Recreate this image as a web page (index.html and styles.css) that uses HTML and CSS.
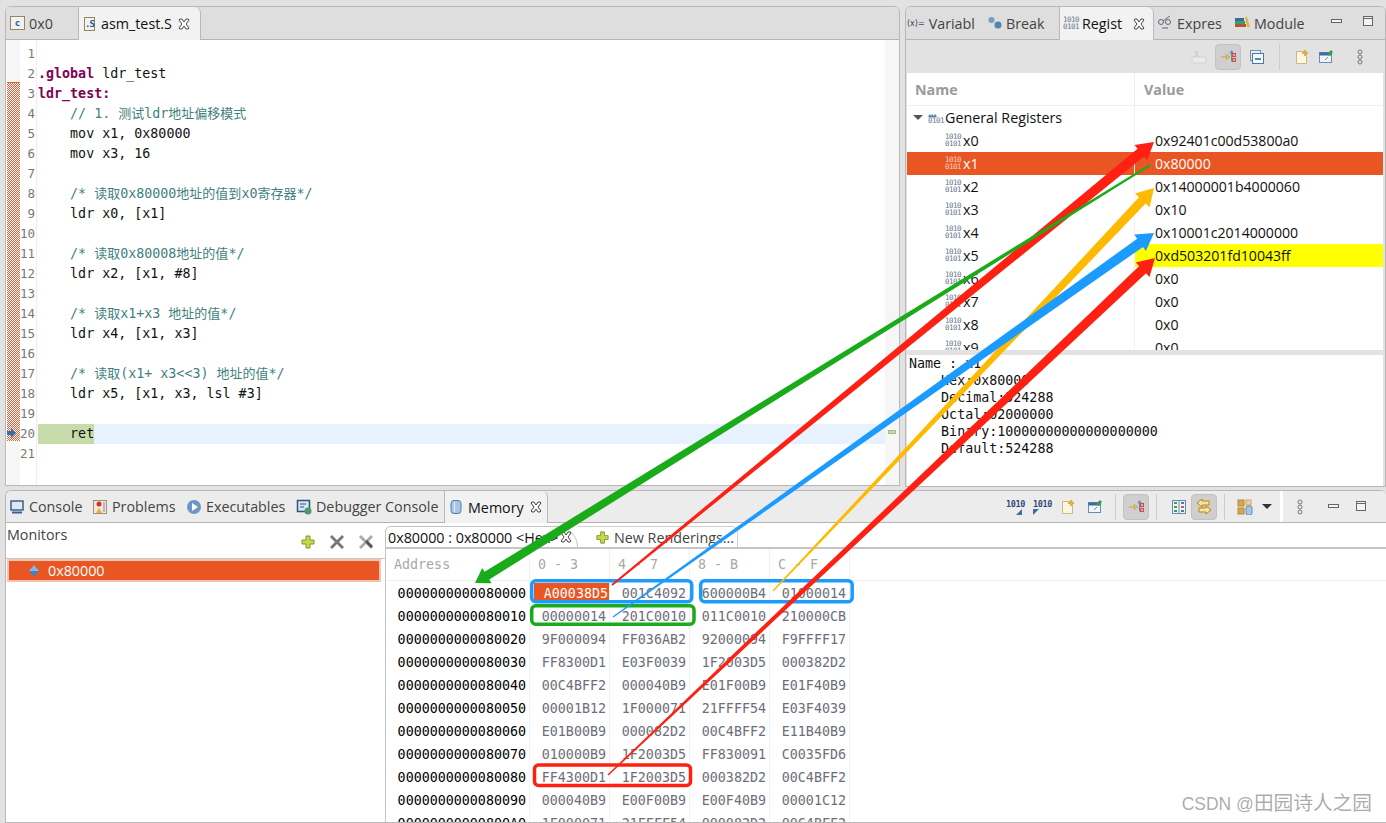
FILE: index.html
```html
<!DOCTYPE html>
<html lang="en">
<head>
    <meta charset="UTF-8">
    <meta name="viewport" content="width=device-width, initial-scale=1.0">
    <title>asm_test.S - Eclipse</title>
    <link rel="stylesheet" href="styles.css">
</head>
<body>
    <svg class="defs" width="0" height="0">
        <symbol id="i-min" viewBox="0 0 16 16"><rect x="2.5" y="5.5" width="10" height="3" fill="#f4f4f4" stroke="#666"/></symbol>
        <symbol id="i-max" viewBox="0 0 16 16"><rect x="3.5" y="2.5" width="9" height="9" fill="#f4f4f4" stroke="#666"/><path d="M3.5 4.5h9" stroke="#666"/></symbol>
        <symbol id="i-close" viewBox="0 0 12 12"><path d="M2 1h2l2 3 2-3h2l1 1-3 4 3 4-1 1H8L6 8l-2 3H2l-1-1 3-4-3-4z" fill="#fff" stroke="#444"/></symbol>
        <symbol id="i-dots" viewBox="0 0 16 16"><circle cx="8" cy="3" r="2" fill="none" stroke="#777"/><circle cx="8" cy="8" r="2" fill="none" stroke="#777"/><circle cx="8" cy="13" r="2" fill="none" stroke="#777"/></symbol>
        <symbol id="i-layout" viewBox="0 0 18 16"><path d="M1 8h9M7 5l4 3-4 3z" fill="#f5dc8c" stroke="#c8a040"/><path d="M13 13V2M11 4l2-3 2 3" fill="none" stroke="#4a7ab0"/><path d="M13 6h3M13 11h3" stroke="#888"/><rect x="14" y="4" width="3.5" height="3.5" fill="#f4a0a0" stroke="#c04848"/><rect x="14" y="9.5" width="3.5" height="3.5" fill="#f4a0a0" stroke="#c04848"/></symbol>
        <symbol id="i-new" viewBox="0 0 16 16"><path d="M2.5 2.5h10v12h-10z" fill="#fbf6e0" stroke="#c9b98a"/><path d="M11 1v6M8 4h6" stroke="#e0b040" stroke-width="2"/></symbol>
        <symbol id="i-pin" viewBox="0 0 16 16"><rect x="1.5" y="3.5" width="12" height="10" fill="#f2f6fb" stroke="#6a8cb0"/><path d="M1.5 5h12" stroke="#3a6ea5" stroke-width="3"/><path d="M7 11l3-3" stroke="#888"/><path d="M9 5l4-4 2 2-4 4z" fill="#3f9a45"/></symbol>
    </svg>

    <div class="top">
        <div class="panel editor-panel">
            <div class="tabs">
                <div class="tab tab-file"><span class="file-icon file-c">c</span>0x0</div>
                <div class="tab active tab-asm"><span class="file-icon file-s">.S</span>asm_test.S<svg class="close"><use href="#i-close"/></svg></div>
            </div>
            <div class="editor">
                <div class="marks">
                    <div class="mark-band"></div>
                    <svg class="pc-arrow" viewBox="0 0 10 10"><path d="M0 3h4V0l5 5-5 5V7H0z" fill="#3a6ea5"/></svg>
                </div>
                <div class="line-numbers">
                    <div>1</div><div>2</div><div>3</div><div>4</div><div>5</div><div>6</div><div>7</div>
                    <div>8</div><div>9</div><div>10</div><div>11</div><div>12</div><div>13</div><div>14</div>
                    <div>15</div><div>16</div><div>17</div><div>18</div><div>19</div><div>20</div><div>21</div>
                </div>
                <div class="code">
                    <div class="ln"></div>
                    <div class="ln"><b>.global</b> ldr_test</div>
                    <div class="ln"><b>ldr_test:</b></div>
                    <div class="ln cm">    // 1. <span class="cn">测试</span>ldr<span class="cn">地址偏移模式</span></div>
                    <div class="ln">    mov x1, 0x80000</div>
                    <div class="ln">    mov x3, 16</div>
                    <div class="ln"></div>
                    <div class="ln cm">    /* <span class="cn">读取</span>0x80000<span class="cn">地址的值到</span>x0<span class="cn">寄存器</span>*/</div>
                    <div class="ln">    ldr x0, [x1]</div>
                    <div class="ln"></div>
                    <div class="ln cm">    /* <span class="cn">读取</span>0x80008<span class="cn">地址的值</span>*/</div>
                    <div class="ln">    ldr x2, [x1, #8]</div>
                    <div class="ln"></div>
                    <div class="ln cm">    /* <span class="cn">读取</span>x1+x3 <span class="cn">地址的值</span>*/</div>
                    <div class="ln">    ldr x4, [x1, x3]</div>
                    <div class="ln"></div>
                    <div class="ln cm">    /* <span class="cn">读取</span>(x1+ x3&lt;&lt;3) <span class="cn">地址的值</span>*/</div>
                    <div class="ln">    ldr x5, [x1, x3, lsl #3]</div>
                    <div class="ln"></div>
                    <div class="ln current"><span class="cur-hit">    ret</span></div>
                    <div class="ln"></div>
                </div>
                <div class="overview"><div class="overview-mark"></div></div>
            </div>
        </div>

        <div class="panel regs-panel">
            <div class="tabs">
                <div class="tab tab-var"><span class="var-icon">(x)=</span>Variabl</div>
                <div class="tab tab-break"><svg class="ic" viewBox="0 0 16 16"><circle cx="4.5" cy="5" r="3" fill="#7a9cc0"/><circle cx="11" cy="10" r="3.5" fill="#4f84b4"/></svg>Break</div>
                <div class="tab active tab-reg"><span class="bits">1010<br>0101</span>Regist<svg class="close"><use href="#i-close"/></svg></div>
                <div class="tab tab-expr"><svg class="ic" viewBox="0 0 16 16"><circle cx="4" cy="7" r="2.5" fill="none" stroke="#667"/><circle cx="11" cy="7" r="2.5" fill="none" stroke="#667"/><path d="M6 6l7-5M5 13h6" stroke="#667"/></svg>Expres</div>
                <div class="tab tab-mod"><svg class="ic" viewBox="0 0 16 16"><path d="M1 3h9v3H1z" fill="#3c6a9c"/><path d="M1 6h10v3H1z" fill="#3c9c70"/><path d="M1 9h11v3H1z" fill="#a85a30"/><path d="M11 2l2 0 3 10h-3z" fill="#e6b040"/></svg>Module</div>
                <div class="tab-tools">
                    <svg class="ic"><use href="#i-min"/></svg>
                    <svg class="ic"><use href="#i-max"/></svg>
                </div>
            </div>
            <div class="toolbar regs-toolbar">
                <svg class="ic dim" viewBox="0 0 16 16"><rect x="1" y="8" width="14" height="6" rx="1" fill="#eee" stroke="#ccc"/><path d="M4 8l3-6M4 2l4 6" stroke="#bbb"/></svg>
                <span class="tool on"><svg class="ic"><use href="#i-layout"/></svg></span>
                <svg class="ic" viewBox="0 0 16 16"><rect x="1.5" y="1.5" width="10" height="10" fill="#e8eef6" stroke="#6f8fb4"/><rect x="3.5" y="4.5" width="11" height="10" fill="#f6f9fc" stroke="#4a78a8"/><path d="M6 10h6" stroke="#2a5a90" stroke-width="1.5"/></svg>
                <span class="tool-sep"></span>
                <svg class="ic"><use href="#i-new"/></svg>
                <svg class="ic"><use href="#i-pin"/></svg>
                <svg class="ic dots"><use href="#i-dots"/></svg>
            </div>
            <div class="reg-table">
                <div class="reg-head">
                    <div class="col-name">Name</div>
                    <div class="col-value">Value</div>
                </div>
                <div class="reg-rows">
                    <div class="reg-row group"><div class="col-name"><span class="twisty"></span><span class="bits group-bits"><i>&#9650;&#9650;&#9650;</i>0101</span>General Registers</div><div class="col-value"></div></div>
                    <div class="reg-row"><div class="col-name"><span class="bits">1010<br>0101</span>x0</div><div class="col-value">0x92401c00d53800a0</div></div>
                    <div class="reg-row selected"><div class="col-name"><span class="bits">1010<br>0101</span>x1</div><div class="col-value">0x80000</div></div>
                    <div class="reg-row"><div class="col-name"><span class="bits">1010<br>0101</span>x2</div><div class="col-value">0x14000001b4000060</div></div>
                    <div class="reg-row"><div class="col-name"><span class="bits">1010<br>0101</span>x3</div><div class="col-value">0x10</div></div>
                    <div class="reg-row"><div class="col-name"><span class="bits">1010<br>0101</span>x4</div><div class="col-value">0x10001c2014000000</div></div>
                    <div class="reg-row"><div class="col-name"><span class="bits">1010<br>0101</span>x5</div><div class="col-value changed">0xd503201fd10043ff</div></div>
                    <div class="reg-row"><div class="col-name"><span class="bits">1010<br>0101</span>x6</div><div class="col-value">0x0</div></div>
                    <div class="reg-row"><div class="col-name"><span class="bits">1010<br>0101</span>x7</div><div class="col-value">0x0</div></div>
                    <div class="reg-row"><div class="col-name"><span class="bits">1010<br>0101</span>x8</div><div class="col-value">0x0</div></div>
                    <div class="reg-row"><div class="col-name"><span class="bits">1010<br>0101</span>x9</div><div class="col-value">0x0</div></div>
                </div>
            </div>
            <pre class="reg-detail">Name : x1
    Hex:0x80000
    Decimal:524288
    Octal:02000000
    Binary:10000000000000000000
    Default:524288</pre>
        </div>
    </div>

    <div class="panel bottom-panel">
        <div class="tabs bottom-tabs">
            <div class="tab tab-con"><svg class="ic" viewBox="0 0 16 16"><rect x="2" y="2" width="12" height="9" fill="#dce8f4" stroke="#3a6090" stroke-width="1.5"/><path d="M3 13.5h10" stroke="#3a6090" stroke-width="2"/></svg>Console</div>
            <div class="tab tab-prob"><svg class="ic" viewBox="0 0 16 16"><rect x="1.5" y="1.5" width="13" height="13" fill="#f3e6d8" stroke="#a09080"/><circle cx="7" cy="5" r="2.5" fill="#d83030"/><path d="M4 14l3-5 3 5z" fill="#e8b030"/><path d="M12 3v10" stroke="#7090b0"/></svg>Problems</div>
            <div class="tab tab-exe"><svg class="ic" viewBox="0 0 16 16"><circle cx="8" cy="8" r="7" fill="#6d96c4"/><path d="M6 4l6 4-6 4z" fill="#fff"/></svg>Executables</div>
            <div class="tab tab-dbg"><svg class="ic" viewBox="0 0 16 16"><rect x="1.5" y="1.5" width="12" height="11" fill="#d8e4f0" stroke="#2f5480" stroke-width="1.5"/><path d="M4 5h6M4 8h4" stroke="#2f5480"/><circle cx="12" cy="12" r="3.5" fill="#4c9a6a"/></svg>Debugger Console</div>
            <div class="tab active tab-mem"><svg class="ic" viewBox="0 0 16 16"><rect x="3" y="1.5" width="10" height="13" rx="3" fill="#a9c6e6" stroke="#4d7fb0"/><path d="M6.5 3v10" stroke="#e6f0fa"/></svg>Memory<svg class="close"><use href="#i-close"/></svg></div>
            <div class="mem-tools">
                <div class="tool-group group-a">
                    <span class="bit-tool bit-a">1010</span>
                    <span class="bit-tool bit-b">1010</span>
                    <svg class="ic"><use href="#i-new"/></svg>
                    <svg class="ic"><use href="#i-pin"/></svg>
                </div>
                <span class="tool-sep"></span>
                <span class="tool on"><svg class="ic"><use href="#i-layout"/></svg></span>
                <span class="tool-sep"></span>
                <div class="tool-group group-c">
                    <svg class="ic" viewBox="0 0 16 16"><rect x="1.5" y="1.5" width="13" height="13" fill="#eef3f8" stroke="#6a8aa8"/><path d="M8 1.5v13" stroke="#6a8aa8"/><path d="M3 4h3M3 8h3M3 12h3" stroke="#3f9a55" stroke-width="2"/><path d="M10 4h3M10 12h3" stroke="#4a7ab0" stroke-width="2"/><path d="M10 8h3" stroke="#d85a5a" stroke-width="2"/></svg>
                    <span class="tool on"><svg class="ic" viewBox="0 0 16 16"><path d="M1 4l5-4v2h7v4H6v2z" fill="#f7e3a8" stroke="#b8860b"/><path d="M15 11l-5-4v2H3v4h7v2z" fill="#f7e3a8" stroke="#b8860b"/></svg></span>
                </div>
                <span class="tool-sep"></span>
                <div class="tool-group group-d">
                    <svg class="ic" viewBox="0 0 16 16"><rect x="1" y="1" width="6" height="6" fill="#d8a850" stroke="#b08838"/><rect x="9" y="1" width="5" height="5" fill="#eed09a" stroke="#c8a868"/><rect x="1" y="9" width="6" height="6" fill="#d8a850" stroke="#b08838"/><rect x="9" y="7" width="6" height="9" rx="2" fill="#a9c6e6" stroke="#5d8cba"/></svg>
                    <span class="caret"></span>
                </div>
                <span class="white-strip"></span>
                <div class="tool-group group-e">
                    <svg class="ic dots"><use href="#i-dots"/></svg>
                    <svg class="ic"><use href="#i-min"/></svg>
                    <svg class="ic"><use href="#i-max"/></svg>
                </div>
            </div>
        </div>
        <div class="bottom-body">
            <div class="monitors">
                <div class="monitors-head">
                    <span class="monitors-title">Monitors</span>
                    <svg class="ic" viewBox="0 0 16 16"><path d="M6 2h4v4h4v4h-4v4H6v-4H2V6h4z" fill="#c6d94a" stroke="#7f9a2c"/></svg>
                    <svg class="ic" viewBox="0 0 16 16"><path d="M3 1l5 5 5-5 2 2-5 5 5 5-2 2-5-5-5 5-2-2 5-5-5-5z" fill="#777"/></svg>
                    <svg class="ic" viewBox="0 0 16 16"><path d="M3 1l5 5 5-5 2 2-5 5 5 5-2 2-5-5-5 5-2-2 5-5-5-5z" fill="#aaa"/><path d="M7 8l2-2 6 6-2 2z" fill="#555"/></svg>
                </div>
                <div class="monitor-row"><svg class="diamond" viewBox="0 0 12 12"><path d="M6 0l5 6-5 6-5-6z" fill="#4a80b8"/><path d="M6 0l5 6H1z" fill="#8db4dc"/></svg>0x80000</div>
            </div>
            <div class="rendering">
                <div class="render-tabs">
                    <div class="render-tab"><span class="render-title">0x80000 : 0x80000 &lt;Hex&gt;</span><svg class="close"><use href="#i-close"/></svg></div>
                    <div class="render-new"><svg class="plus" viewBox="0 0 16 16"><path d="M6 2h4v4h4v4h-4v4H6v-4H2V6h4z" fill="#c6d94a" stroke="#7f9a2c"/></svg>New Renderings...</div>
                </div>
                <div class="mem-table">
                    <div class="mem-row mem-head"><div class="addr">Address</div><div>0 - 3</div><div>4 - 7</div><div>8 - B</div><div>C - F</div></div>
                    <div class="mem-row"><div class="addr">0000000000080000</div><div class="hit">A00038D5</div><div>001C4092</div><div>600000B4</div><div>01000014</div></div>
                    <div class="mem-row"><div class="addr">0000000000080010</div><div>00000014</div><div>201C0010</div><div>011C0010</div><div>210000CB</div></div>
                    <div class="mem-row"><div class="addr">0000000000080020</div><div>9F000094</div><div>FF036AB2</div><div>92000094</div><div>F9FFFF17</div></div>
                    <div class="mem-row"><div class="addr">0000000000080030</div><div>FF8300D1</div><div>E03F0039</div><div>1F2003D5</div><div>000382D2</div></div>
                    <div class="mem-row"><div class="addr">0000000000080040</div><div>00C4BFF2</div><div>000040B9</div><div>E01F00B9</div><div>E01F40B9</div></div>
                    <div class="mem-row"><div class="addr">0000000000080050</div><div>00001B12</div><div>1F000071</div><div>21FFFF54</div><div>E03F4039</div></div>
                    <div class="mem-row"><div class="addr">0000000000080060</div><div>E01B00B9</div><div>000082D2</div><div>00C4BFF2</div><div>E11B40B9</div></div>
                    <div class="mem-row"><div class="addr">0000000000080070</div><div>010000B9</div><div>1F2003D5</div><div>FF830091</div><div>C0035FD6</div></div>
                    <div class="mem-row"><div class="addr">0000000000080080</div><div>FF4300D1</div><div>1F2003D5</div><div>000382D2</div><div>00C4BFF2</div></div>
                    <div class="mem-row"><div class="addr">0000000000080090</div><div>000040B9</div><div>E00F00B9</div><div>E00F40B9</div><div>00001C12</div></div>
                    <div class="mem-row"><div class="addr">00000000000800A0</div><div>1F000071</div><div>21FFFF54</div><div>000082D2</div><div>00C4BFF2</div></div>
                </div>
            </div>
        </div>
    </div>

    <!-- hand drawn annotations over the screenshot -->
    <svg class="notes" viewBox="0 0 1386 823">
        <rect class="box blue" x="531.7" y="580.7" width="160" height="21" rx="4"/>
        <rect class="box blue" x="700.7" y="580.7" width="151.5" height="21" rx="4"/>
        <rect class="box green" x="531.7" y="605.7" width="162.3" height="18.6" rx="4"/>
        <rect class="box red" x="534.5" y="765" width="156" height="20.5" rx="4"/>
        <polygon class="red-fill" points="611.4,584.2 1137.6,148.8 1134.5,145 1154,142 1147.1,160.5 1144,156.6 612.6,585.8"/>
        <polygon class="yellow-fill" points="772.5,590.5 1139,197.3 1135,193.5 1154,188 1149.6,207.3 1145.6,203.5 773.5,591.5"/>
        <polygon class="blue-fill" points="612.6,616.4 1137.2,238.7 1134.3,234.6 1154,233 1145.9,251 1143,246.9 613.4,617.6"/>
        <polygon class="green-fill" points="1149.5,164.2 484.5,571.8 482.2,568 475,583 491.6,583.2 489.3,579.4 1150.5,165.9"/>
        <polygon class="red-fill" points="607.5,774.5 1139.2,266.1 1135.7,262.4 1155,258 1149.5,277 1146,273.3 608.5,775.5"/>
    </svg>
    <div class="watermark">CSDN @<span>田园诗人之园</span></div>
</body>
</html>
```

FILE: styles.css
```css
html, body {
    margin: 0;
    padding: 0;
    height: 823px;
    overflow: hidden;
}
body {
    position: relative;
    width: 1386px;
    background-color: #e2e2e2;
    font-family: "Open Sans", "Noto Sans", sans-serif;
    font-size: 14.3px;
    color: #111;
}
.defs {
    position: absolute;
}
.ic {
    width: 16px;
    height: 16px;
    flex: none;
}
.top {
    display: flex;
    gap: 5px;
    height: 480px;
    padding: 6px 0 0 5px;
}
.panel {
    box-sizing: border-box;
    display: flex;
    flex-direction: column;
    flex: none;
    background-color: #fff;
    border: 1px solid #b8b8b8;
    border-radius: 6px 6px 0 0;
    overflow: hidden;
}
.editor-panel {
    width: 895px;
    height: 480px;
}
.regs-panel {
    width: 481px;
    height: 481px;
    background-color: #e2e2e2;
}
.bottom-panel {
    height: 333px;
    margin: 4px 0 0 5px;
    width: 1381px;
    border-right: none;
}

/* tabs */
.tabs {
    display: flex;
    align-items: stretch;
    box-sizing: border-box;
    height: 33px;
    flex: none;
    background-color: #dedede;
    border-bottom: 1px solid #b4b4b4;
    color: #444;
}
.tab {
    display: flex;
    align-items: center;
    box-sizing: border-box;
    white-space: nowrap;
}
.tab .ic {
    margin-right: 4px;
}
.tab.active {
    background-color: #f2f2f2;
    color: #111;
    border: 1px solid #b8b8b8;
    border-top: none;
    border-bottom: none;
    border-radius: 0 6px 0 0;
    margin-bottom: -1px;
}
.close {
    width: 12px;
    height: 12px;
    margin-left: 6px;
    flex: none;
}
.file-icon {
    display: inline-block;
    box-sizing: border-box;
    width: 15px;
    height: 14px;
    margin-right: 4px;
    border: 1px solid #9a8450;
    background-color: #eef3fa;
    color: #2c5a90;
    font: bold 9px/12px "DejaVu Sans Mono", monospace;
    text-align: center;
}
.file-s {
    width: 11px;
    margin-right: 6px;
    letter-spacing: -1px;
}
.tab-file {
    width: 72px;
    padding-left: 4px;
}
.tab-asm {
    width: 123px;
    padding-left: 5px;
}
.tab-var {
    width: 80px;
    padding-left: 1px;
}
.var-icon {
    font: 8px "DejaVu Sans", sans-serif;
    color: #445;
    margin-right: 4px;
}
.tab-break {
    width: 73px;
    padding-left: 1px;
}
.tab-break .ic {
    margin-right: 3px;
}
.tab-reg {
    width: 95px;
    padding-left: 3px;
}
.tab-reg .close {
    margin-left: 11px;
}
.tab-expr {
    width: 78px;
    padding-left: 3px;
}
.tab-mod {
    width: 90px;
    padding-left: 2px;
}
.tab-tools {
    display: flex;
    align-items: center;
    gap: 15px;
    padding: 0 0 2px 7px;
}
.bits {
    display: inline-block;
    width: 16px;
    margin-right: 2px;
    font: 7.5px/6.5px "DejaVu Sans Mono", monospace;
    color: #66748a;
    letter-spacing: -0.5px;
}
.tab-reg .bits {
    margin-right: 3px;
}

/* editor */
.editor {
    display: flex;
    flex: 1;
    padding-top: 4px;
    background-color: #fff;
    font: 13.33px/20px "DejaVu Sans Mono", "Noto Sans CJK SC", monospace;
    overflow: hidden;
}
.marks {
    position: relative;
    width: 13px;
    margin-left: 1px;
    margin-top: -4px;
    background-color: #f6f6f6;
    flex: none;
}
.mark-band {
    position: absolute;
    top: 42px;
    left: 0;
    width: 100%;
    height: 359px;
    background: repeating-conic-gradient(#e8603a 0 25%, #fff 0 50%) 0 0 / 2px 2px;
    border-top: 1px solid #e8603a;
    box-sizing: border-box;
}
.pc-arrow {
    position: absolute;
    top: 388px;
    left: 0;
    width: 10px;
    height: 10px;
}
.line-numbers {
    box-sizing: border-box;
    width: 17px;
    text-align: right;
    color: #787878;
    border-right: 1px solid #eee;
    margin-top: -4px;
    padding-top: 4px;
    padding-right: 1px;
    flex: none;
    font-size: 12.5px;
}
.code {
    flex: 1;
    margin-left: 1px;
}
.ln {
    height: 20px;
    white-space: pre;
}
.ln b {
    color: #7f0055;
}
.cm {
    color: #3f7f7f;
}
.cn {
    font-size: 13px;
}
.current {
    background-color: #e8f2fe;
}
.cur-hit {
    display: inline-block;
    background-color: #c7dbaa;
}
.overview {
    position: relative;
    width: 14px;
    background-color: #f6f6f6;
    margin-top: -4px;
    flex: none;
}
.overview-mark {
    position: absolute;
    top: 390px;
    left: 3px;
    width: 8px;
    height: 4px;
    background-color: #c7dbaa;
    border: 1px solid #9fc080;
    box-sizing: border-box;
}

/* toolbars */
.toolbar {
    display: flex;
    align-items: center;
    justify-content: flex-end;
    flex: none;
}
.regs-toolbar {
    height: 33px;
    gap: 8px;
    padding-right: 17px;
}
.regs-toolbar .dots {
    margin-left: 10px;
}
.tool {
    display: flex;
    align-items: center;
    justify-content: center;
    width: 26px;
    height: 26px;
    flex: none;
    border-radius: 4px;
    background-color: #cfcfcf;
    border: 1px solid #c2c2c2;
    box-sizing: border-box;
}
.tool-sep {
    width: 1px;
    height: 26px;
    flex: none;
    background-color: #cdcdcd;
    margin: 0 7px;
}
.regs-toolbar .tool-sep {
    margin: 0 6px;
}
.dim {
    opacity: 0.7;
}

/* registers */
.reg-table {
    box-sizing: border-box;
    height: 277px;
    margin-left: 1px;
    margin-right: 2px;
    background-color: #fff;
    overflow: hidden;
    flex: none;
}
.reg-head {
    display: flex;
    height: 33px;
    align-items: center;
    color: #9a9a9a;
    font-weight: 700;
    border-bottom: 1px solid #efefef;
    box-sizing: border-box;
}
.reg-head .col-name {
    padding-left: 8px;
}
.reg-head .col-value {
    padding-left: 9px;
    border-left: 1px solid #efefef;
    height: 100%;
    display: flex;
    align-items: center;
}
.col-name {
    width: 227px;
    flex: none;
    box-sizing: border-box;
    display: flex;
    align-items: center;
}
.reg-row {
    display: flex;
    height: 23px;
    align-items: center;
}
.reg-row .col-name {
    padding-left: 38px;
    height: 100%;
}
.reg-row.group .col-name {
    padding-left: 6px;
}
.reg-row .col-value {
    flex: 1;
    height: 100%;
    box-sizing: border-box;
    display: flex;
    align-items: center;
    padding-left: 20px;
    border-left: 1px solid #f2f2f2;
    font-size: 14.1px;
}
.reg-row .col-value.changed {
    background-color: #ffff00;
}
.reg-row.selected {
    background-color: #ea5623;
    color: #fff;
}
.reg-row.selected .bits {
    color: #f5d5c8;
}
.twisty {
    width: 0;
    height: 0;
    margin-right: 5px;
    border-left: 5px solid transparent;
    border-right: 5px solid transparent;
    border-top: 5px solid #555;
}
.group-bits {
    margin-right: 1px;
}
.group-bits i {
    display: block;
    font-style: normal;
    font-size: 6px;
    line-height: 7px;
    color: #4a7ab0;
    letter-spacing: -1px;
}
.reg-detail {
    flex: 1;
    margin: 5px 2px 0 1px;
    padding: 0 0 0 2px;
    background-color: #fff;
    font: 13.33px/17px "DejaVu Sans Mono", monospace;
    color: #111;
}

/* bottom */
.bottom-tabs {
    height: 32px;
    background-color: #ececec;
    position: relative;
}
.tab-con {
    width: 83px;
    padding-left: 3px;
}
.tab-prob {
    width: 95px;
    padding-left: 3px;
}
.tab-exe {
    width: 110px;
    padding-left: 2px;
}
.tab-dbg {
    width: 150px;
    padding-left: 2px;
}
.tab-mem {
    width: 104px;
    padding-left: 3px;
    background-color: #fff;
}
.mem-tools {
    position: absolute;
    top: 0;
    right: 0;
    height: 31px;
    display: flex;
    align-items: center;
    padding-right: 17px;
}
.tool-group {
    display: flex;
    align-items: center;
}
.group-a {
    gap: 11px;
    margin-right: 5px;
}
.group-c {
    gap: 4px;
    margin-left: 7px;
}
.group-d {
    gap: 9px;
    margin-left: 5px;
}
.group-e {
    gap: 11px;
    margin-left: 9px;
}
.group-e .dots {
    margin-right: 7px;
}
.bit-tool {
    width: 16px;
    font: bold 8.5px/10px "DejaVu Sans Mono", monospace;
    letter-spacing: -0.4px;
    color: #2c4a7c;
    position: relative;
    top: -3px;
}
.bit-tool::after {
    content: "";
    position: absolute;
    top: 10px;
    width: 0;
    height: 0;
    border: 3px solid #3a6ea5;
}
.bit-a::after {
    left: 10px;
    border-color: transparent #3a6ea5 #3a6ea5 transparent;
}
.bit-b::after {
    left: 0;
    border-color: #3a6ea5 transparent transparent #3a6ea5;
}
.caret {
    width: 0;
    height: 0;
    border-left: 5px solid transparent;
    border-right: 5px solid transparent;
    border-top: 5px solid #333;
}
.white-strip {
    width: 3px;
    height: 31px;
    background-color: #fff;
    margin-left: 8px;
}
.bottom-body {
    display: flex;
    flex: 1;
    min-height: 0;
}
.monitors {
    width: 379px;
    flex: none;
}
.monitors-head {
    display: flex;
    align-items: flex-start;
    height: 36px;
    border-bottom: 1px solid #c8c8c8;
    box-sizing: border-box;
    color: #444;
    padding: 2px 11px 0 1px;
    gap: 13px;
}
.monitors-head .ic {
    margin-top: 9px;
}
.monitors-title {
    flex: 1;
}
.monitor-row {
    display: flex;
    align-items: center;
    box-sizing: border-box;
    height: 23px;
    margin: 0 4px 0 1px;
    background-color: #ea5623;
    border: 2px solid #f4c4b0;
    color: #fff;
    padding-left: 19px;
}
.diamond {
    width: 12px;
    height: 12px;
    margin-right: 8px;
    flex: none;
}
.rendering {
    flex: 1;
    min-width: 0;
    display: flex;
    flex-direction: column;
    padding-top: 3px;
}
.render-tabs {
    display: flex;
    height: 23px;
    box-sizing: border-box;
    flex: none;
    border-bottom: 2px solid #c4c4c4;
    white-space: nowrap;
}
.render-tab {
    width: 193px;
    padding-left: 2px;
    display: flex;
    align-items: center;
    box-sizing: border-box;
    flex: none;
    border: 1px solid #c4c4c4;
    border-bottom: none;
    border-radius: 6px 22px 0 0;
}
.render-title {
    width: 172px;
    flex: none;
    overflow: hidden;
}
.render-tab .close {
    margin-left: 0;
}
.render-new {
    display: flex;
    align-items: center;
    box-sizing: border-box;
    width: 160px;
    padding-left: 17px;
    color: #444;
    border-top: 1px solid #d0d0d0;
    border-right: 1px solid #d0d0d0;
    border-radius: 0 6px 0 0;
}
.plus {
    width: 15px;
    height: 15px;
    margin-right: 4px;
    flex: none;
}
.mem-table {
    flex: 1;
    border-left: 1px solid #c4c4c4;
    font: 13.33px/25px "DejaVu Sans Mono", monospace;
    color: #6e6e7a;
    overflow: hidden;
}
.mem-row {
    display: grid;
    grid-template-columns: 144px 80px 80px 80px 80px;
    height: 23px;
}
.mem-row > div {
    box-sizing: border-box;
    height: 100%;
    padding-right: 3px;
    text-align: right;
    border-right: 1px solid #f2f2f2;
    white-space: nowrap;
}
.mem-row .addr {
    color: #000;
    padding-right: 3px;
}
.mem-head {
    height: 32px;
    line-height: 32px;
    color: #a8a8a8;
    border-bottom: 1px solid #efefef;
    box-sizing: border-box;
}
.mem-head > div {
    text-align: left;
    padding-left: 8px;
}
.mem-head .addr {
    color: #a8a8a8;
}
.mem-row .hit {
    background: linear-gradient(#fff 2px, #ea5623 2px, #ea5623 19px, #fff 19px) no-repeat 4px 0 / 100% 100%;
    color: #fff;
    padding-right: 1px;
}

/* annotations */
.notes {
    position: absolute;
    top: 0;
    left: 0;
    width: 1386px;
    height: 823px;
    pointer-events: none;
}
.box {
    fill: none;
    stroke-width: 3.5;
}
.box.blue {
    stroke: #1c9bff;
}
.box.green {
    stroke: #1aab1a;
}
.box.red {
    stroke: #fe2012;
}
.red-fill {
    fill: #fe2012;
}
.yellow-fill {
    fill: #ffb900;
}
.blue-fill {
    fill: #1c9bff;
}
.green-fill {
    fill: #1aab1a;
}
.watermark {
    position: absolute;
    right: 14px;
    bottom: 7px;
    font-family: "Liberation Sans", "Noto Sans CJK SC", sans-serif;
    font-size: 17.5px;
    line-height: 24px;
    color: rgba(100, 100, 100, 0.55);
}
.watermark span {
    font-size: 19.7px;
}
```
